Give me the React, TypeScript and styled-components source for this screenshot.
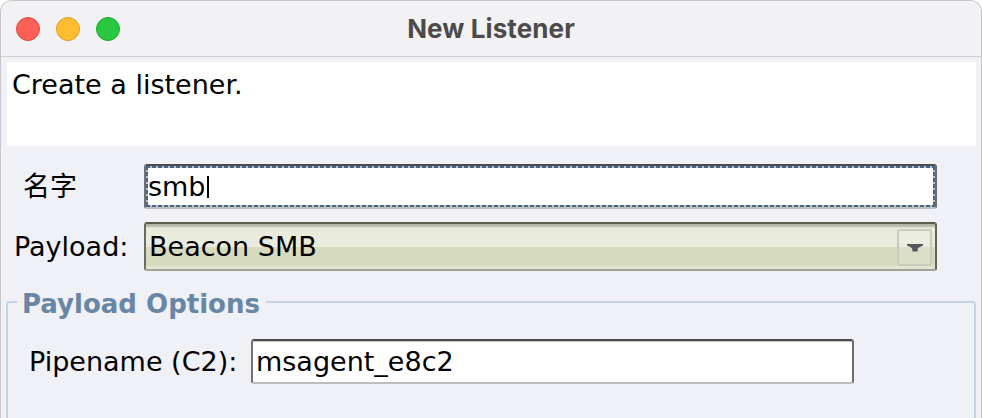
import React from "react";
import styled, { createGlobalStyle } from "styled-components";

const Global = createGlobalStyle`
  html, body { margin: 0; padding: 0; background: #ffffff; }
  body { font-family: "DejaVu Sans", "Noto Sans CJK SC", sans-serif; }
`;

const Window = styled.div`
  box-sizing: border-box;
  width: 982px;
  height: 418px;
  overflow: hidden;
  display: flex;
  flex-direction: column;
  background: #eff1f6;
  border: 1px solid #c6c6c8;
  border-bottom: none;
  border-radius: 12px 12px 0 0;
`;

const TitleBar = styled.div`
  height: 55px;
  flex: none;
  display: grid;
  grid-template-columns: 1fr auto 1fr;
  align-items: center;
  background: #f2f2f4;
  border-bottom: 1px solid #cfcfd3;
  border-radius: 11px 11px 0 0;
`;

const Lights = styled.div`
  display: flex;
  gap: 16px;
  padding-left: 15px;
`;

const Light = styled.span<{ $fill: string; $edge: string }>`
  width: 24px;
  height: 24px;
  box-sizing: border-box;
  border-radius: 50%;
  background: ${(p) => p.$fill};
  border: 1px solid ${(p) => p.$edge};
`;

const Title = styled.div`
  font-family: Inter, "Liberation Sans", sans-serif;
  font-weight: 700;
  font-size: 26px;
  color: #4b4b4b;
  letter-spacing: 0.1px;
`;

const Body = styled.div`
  flex: 1;
  padding: 5px 5px 0 5px;
  display: flex;
  flex-direction: column;
`;

const Banner = styled.div`
  height: 84px;
  box-sizing: border-box;
  background: #ffffff;
  padding: 7px 5px;
  margin-left: 1px;
  font-size: 27px;
  line-height: 31px;
  color: #000;
`;

const Form = styled.div`
  display: flex;
  flex-direction: column;
  gap: 13px;
  margin-top: 18px;
`;

const Row = styled.div`
  display: flex;
  align-items: center;
`;

const Label = styled.div<{ $indent: number; $width: number }>`
  box-sizing: border-box;
  width: ${(p) => p.$width}px;
  padding-left: ${(p) => p.$indent}px;
  font-size: 27px;
  line-height: 31px;
  color: #000;
  white-space: nowrap;
  flex: none;
`;

const FieldFrame = styled.div<{ $width: number }>`
  box-sizing: border-box;
  width: ${(p) => p.$width}px;
  height: 45px;
  border-style: solid;
  border-width: 2px;
  border-color: #4d4d4d #6c6c6c #bdbdbd #707070;
  border-radius: 3px;
  background: #fff;
  box-shadow: inset 0 1px 0 #c4c4c4;
  flex: none;
`;

const FocusRing = styled.div`
  box-sizing: border-box;
  height: 100%;
  padding: 0 2px;
  display: flex;
  align-items: center;
  background:
    repeating-linear-gradient(90deg, #4a6484 0 4px, #b9c3cf 4px 6px) top left / 100% 2px no-repeat,
    repeating-linear-gradient(90deg, #4a6484 0 4px, #b9c3cf 4px 6px) bottom left / 100% 2px no-repeat,
    repeating-linear-gradient(180deg, #4a6484 0 4px, #b9c3cf 4px 6px) top left / 2px 100% no-repeat,
    repeating-linear-gradient(180deg, #4a6484 0 4px, #b9c3cf 4px 6px) top right / 2px 100% no-repeat,
    #ffffff;
`;

const FieldText = styled.div<{ $pad: number }>`
  box-sizing: border-box;
  height: 100%;
  padding: 0 ${(p) => p.$pad}px;
  display: flex;
  align-items: center;
  font-size: 27px;
  line-height: 31px;
  color: #000;
`;

const Caret = styled.span`
  display: inline-block;
  width: 2px;
  height: 22px;
  margin-left: 1px;
  background: #000;
`;

const Combo = styled.div`
  box-sizing: border-box;
  width: 793px;
  height: 49px;
  border-style: solid;
  border-width: 2px;
  border-color: #595b4b #62645a #a2a398 #6a6c60;
  border-radius: 3px;
  background: linear-gradient(
    to bottom,
    #b4b7a7 0px,
    #b4b7a7 2px,
    #e9ebdd 4px,
    #e9ebdd 23px,
    #d6dbbe 23px,
    #d6dbbe 42px,
    #e2e5d0 42px
  );
  display: flex;
  align-items: center;
  justify-content: space-between;
  padding: 0 3px 0 3px;
  flex: none;
`;

const ComboText = styled.div`
  font-size: 27px;
  line-height: 31px;
  color: #000;
`;

const ArrowButton = styled.div`
  box-sizing: border-box;
  width: 35px;
  height: 37px;
  margin-top: 2px;
  border: 2px solid #cacbbd;
  border-radius: 3px;
  background: linear-gradient(to bottom, #ebede1 0, #ebede1 50%, #dadfc5 50%, #dadfc5 100%);
  display: flex;
  align-items: center;
  justify-content: center;
`;

const Group = styled.fieldset`
  margin: 13px 0 0 0;
  padding: 0 0 40px 0;
  border: 2px solid #c5d2e3;
  border-radius: 4px;
  min-width: 0;
`;

const Legend = styled.legend`
  margin-left: 9px;
  padding: 5px 6px 0 5px;
  font-weight: 700;
  font-size: 26px;
  line-height: 30px;
  color: #6886a6;
`;

const GroupRow = styled(Row)`
  margin-top: 20px;
`;

const ArrowIcon = () => (
  <svg width="16" height="8" viewBox="0 0 16 8">
    <polygon points="0,0 16,0 16,1.5 11,4 10.5,7.5 5.5,7.5 5,4 0,1.5" fill="#565656" />
  </svg>
);

export default function App() {
  return (
    <>
      <Global />
      <Window>
        <TitleBar>
          <Lights>
            <Light $fill="#fe5f57" $edge="#e1473f" />
            <Light $fill="#febc2e" $edge="#dfa023" />
            <Light $fill="#28c840" $edge="#1ea932" />
          </Lights>
          <Title>New Listener</Title>
          <div />
        </TitleBar>
        <Body>
          <Banner>Create a listener.</Banner>
          <Form>
            <Row>
              <Label $indent={17} $width={138}>
                名字
              </Label>
              <FieldFrame $width={793}>
                <FocusRing>
                  <FieldText $pad={0}>
                    smb
                    <Caret />
                  </FieldText>
                </FocusRing>
              </FieldFrame>
            </Row>
            <Row>
              <Label $indent={8} $width={138}>
                Payload:
              </Label>
              <Combo>
                <ComboText>Beacon SMB</ComboText>
                <ArrowButton>
                  <ArrowIcon />
                </ArrowButton>
              </Combo>
            </Row>
          </Form>
          <Group>
            <Legend>Payload Options</Legend>
            <GroupRow>
              <Label $indent={21} $width={243}>
                Pipename (C2):
              </Label>
              <FieldFrame $width={603}>
                <FieldText $pad={3}>msagent_e8c2</FieldText>
              </FieldFrame>
            </GroupRow>
          </Group>
        </Body>
      </Window>
    </>
  );
}
